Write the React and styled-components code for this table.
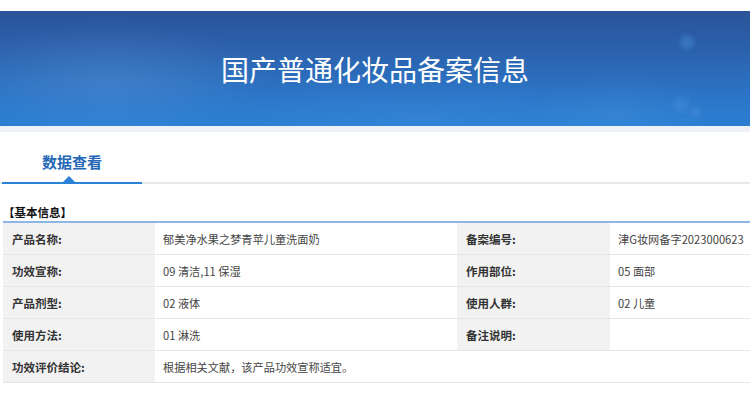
import React from 'react';
import styled, { createGlobalStyle } from 'styled-components';

const GlobalStyle = createGlobalStyle`
  html, body {
    margin: 0;
    padding: 0;
    background: #fff;
    overflow: hidden;
  }
  body {
    font-family: "Noto Sans CJK SC", "Liberation Sans", sans-serif;
    color: #333;
  }
`;

const Page = styled.div`
  width: 750px;
  padding-top: 11px;
`;

const Banner = styled.div`
  position: relative;
  height: 115px;
  overflow: hidden;
  display: flex;
  align-items: center;
  justify-content: center;
  background:
    radial-gradient(ellipse 160px 60px at 110px 70px, rgba(120, 170, 230, 0.25), transparent),
    radial-gradient(ellipse 220px 50px at 420px 110px, rgba(80, 150, 230, 0.22), transparent),
    radial-gradient(ellipse 90px 40px at 620px 105px, rgba(90, 160, 225, 0.2), transparent),
    linear-gradient(180deg, #2b5399 0%, #2b62ad 35%, #2b73c4 70%, #2a7fd3 100%);
`;

const Dot = styled.span`
  position: absolute;
  left: ${p => p.x}px;
  top: ${p => p.y}px;
  width: ${p => p.s}px;
  height: ${p => p.s}px;
  border-radius: 50%;
  background: rgba(70, 140, 215, 0.45);
  filter: blur(2px);
`;

const Title = styled.h1`
  margin: 0;
  font-size: 28px;
  font-weight: normal;
  color: #fff;
  line-height: 1;
`;

const Strip = styled.div`
  height: 6px;
  background: #eef2f6;
`;

const TabBar = styled.div`
  height: 52px;
  display: flex;
  align-items: flex-end;
  border-bottom: 2px solid #e8e8e8;
  box-sizing: border-box;
`;

const Tab = styled.div`
  position: relative;
  width: 140px;
  margin-left: 2px;
  margin-bottom: -2px;
  height: 50px;
  box-sizing: border-box;
  border-bottom: 2px solid #2a82d4;
  display: flex;
  justify-content: center;
  padding-top: 17px;
  font-size: 15px;
  font-weight: bold;
  color: #2468b5;

  &::after {
    content: '';
    position: absolute;
    left: 61px;
    bottom: 0;
    border-left: 6px solid transparent;
    border-right: 6px solid transparent;
    border-bottom: 6px solid #2a82d4;
  }
`;

const Section = styled.div`
  padding: 21px 0 0 3px;
`;

const SectionTitle = styled.div`
  font-size: 11.5px;
  font-weight: bold;
  color: #111;
  line-height: 14px;
  padding-bottom: 2px;
  border-bottom: 2px solid #8db5e6;
`;

const Grid = styled.div`
  display: grid;
  grid-template-columns: 152px 302px 153px 1fr;
`;

const Cell = styled.div`
  height: 32px;
  box-sizing: border-box;
  border-bottom: 1px solid #e6e6e6;
  display: flex;
  align-items: center;
  font-size: ${p => (p.label ? 11.5 : 11.2)}px;
  padding-left: ${p => (p.label ? 9 : 8)}px;
  background: ${p => (p.label ? '#f2f2f2' : '#fff')};
  font-weight: ${p => (p.label ? 'bold' : 'normal')};
  color: ${p => (p.label ? '#333' : '#444')};
  grid-column: ${p => (p.span ? `span ${p.span}` : 'auto')};
  white-space: nowrap;
  overflow: hidden;
`;

const rows = [
  ['产品名称:', '郁美净水果之梦青苹儿童洗面奶', '备案编号:', '津G妆网备字2023000623'],
  ['功效宣称:', '09 清洁,11 保湿', '作用部位:', '05 面部'],
  ['产品剂型:', '02 液体', '使用人群:', '02 儿童'],
  ['使用方法:', '01 淋洗', '备注说明:', ''],
];

export default function App() {
  return (
    <>
      <GlobalStyle />
      <Page>
        <Banner>
          <Dot x={680} y={24} s={14} />
          <Dot x={673} y={86} s={16} />
          <Dot x={690} y={95} s={12} />
          <Title>国产普通化妆品备案信息</Title>
        </Banner>
        <Strip />
        <TabBar>
          <Tab>数据查看</Tab>
        </TabBar>
        <Section>
          <SectionTitle>【基本信息】</SectionTitle>
          <Grid>
            {rows.map(r => (
              <React.Fragment key={r[0]}>
                <Cell label>{r[0]}</Cell>
                <Cell>{r[1]}</Cell>
                <Cell label>{r[2]}</Cell>
                <Cell>{r[3]}</Cell>
              </React.Fragment>
            ))}
            <Cell label>功效评价结论:</Cell>
            <Cell span={3}>根据相关文献，该产品功效宣称适宜。</Cell>
          </Grid>
        </Section>
      </Page>
    </>
  );
}
